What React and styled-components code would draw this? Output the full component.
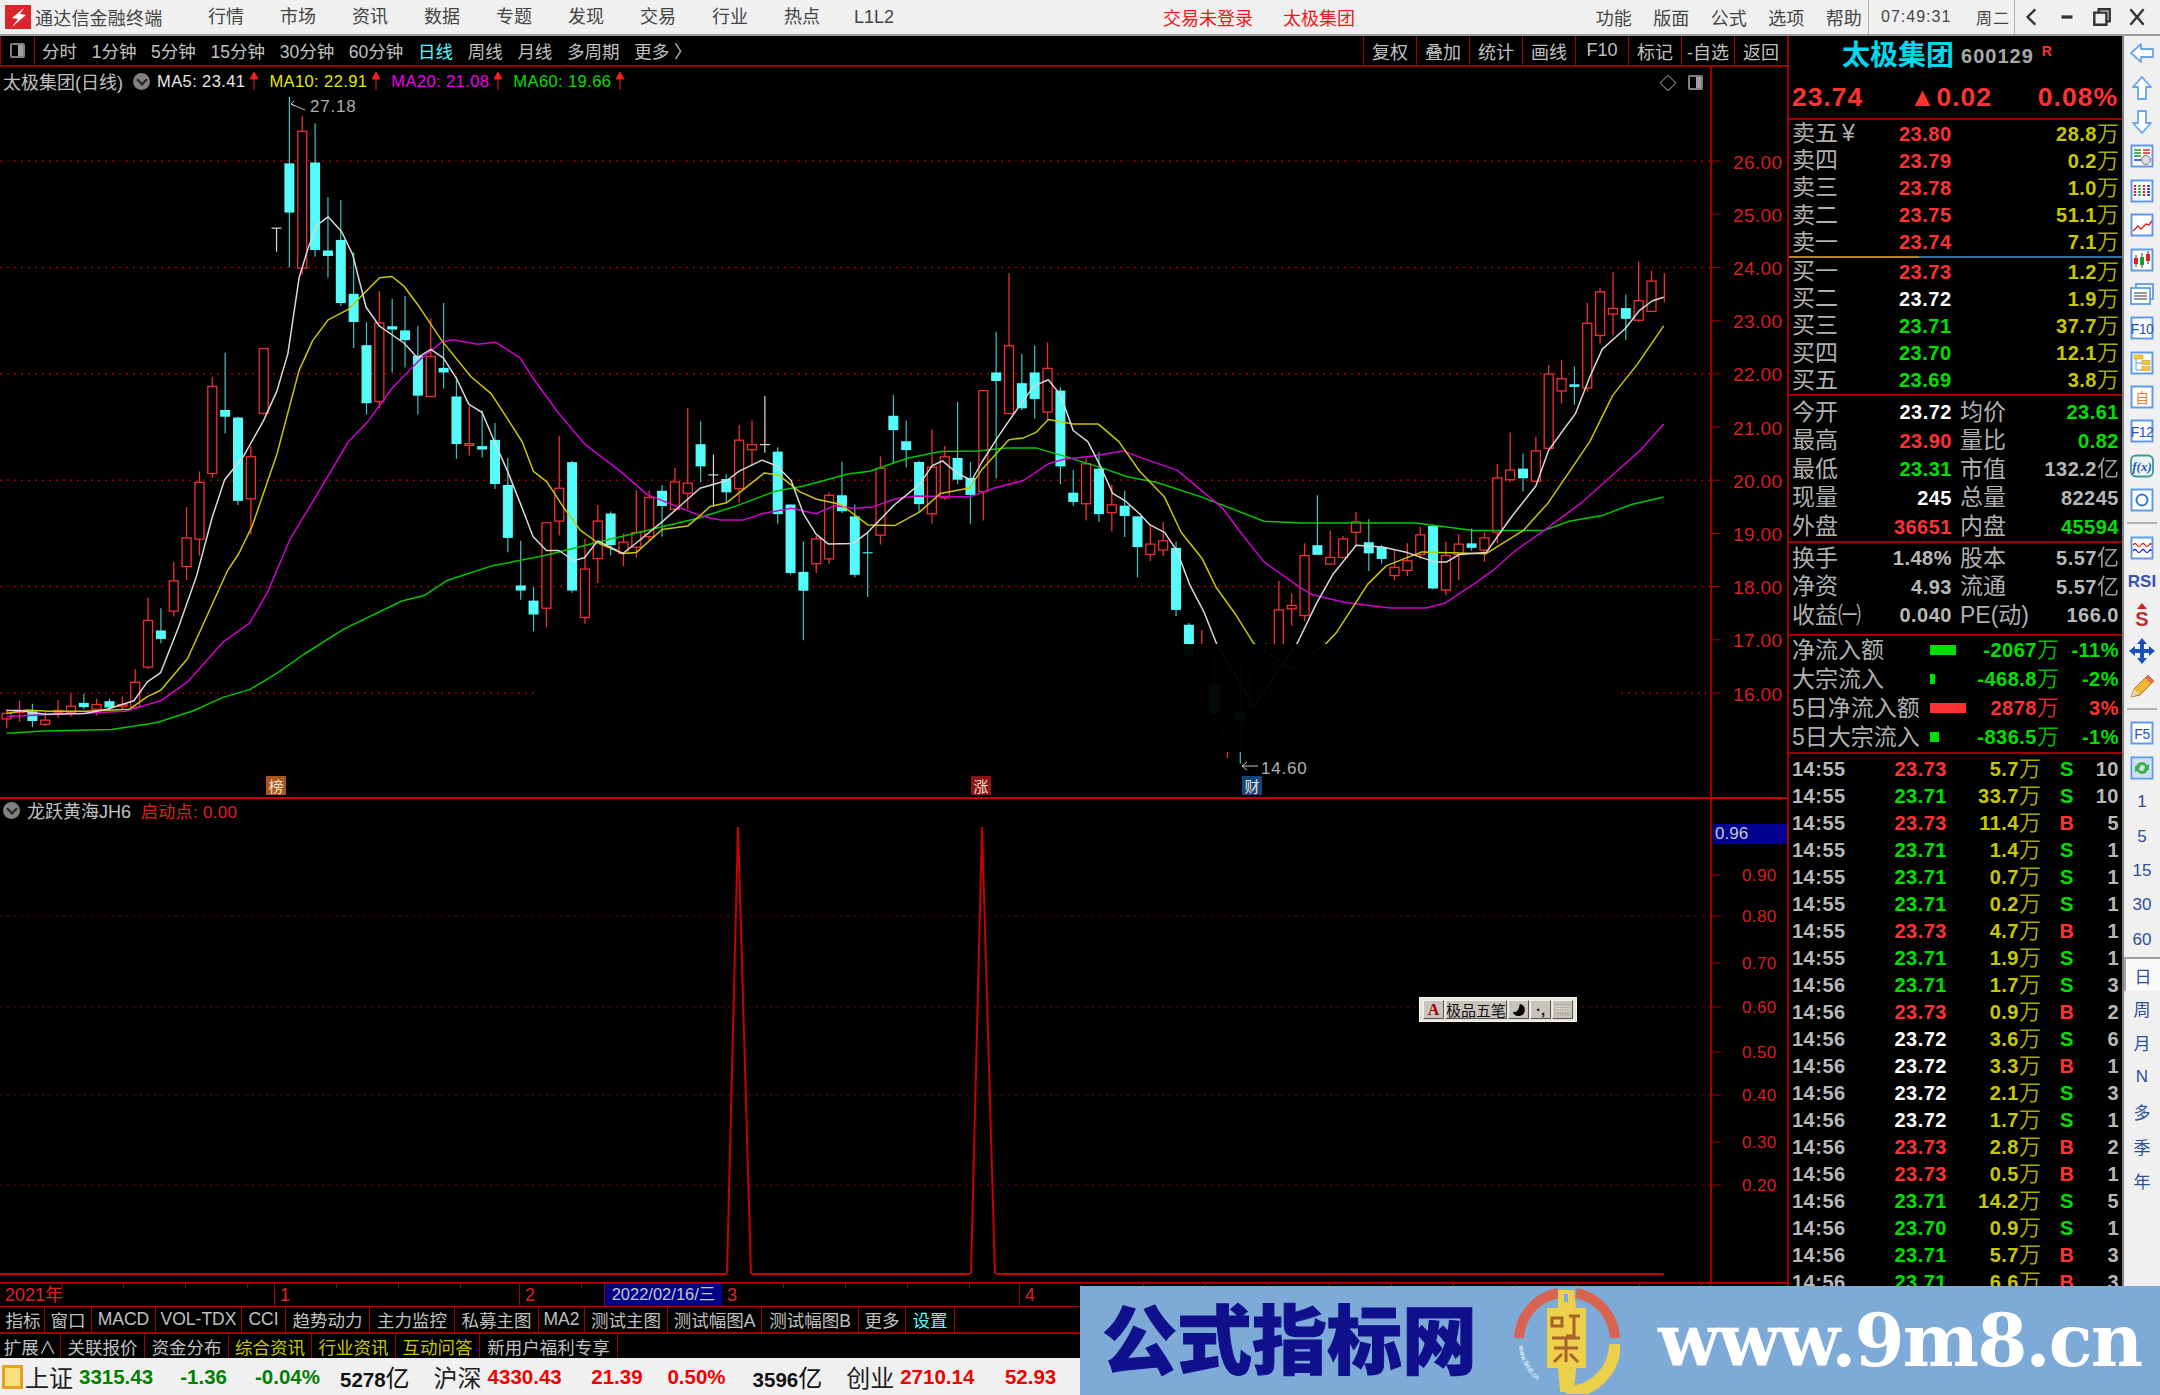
import styled, { createGlobalStyle } from "styled-components";

const FONT = `"Liberation Sans", "Noto Sans CJK SC", sans-serif`;
const RED = "#ff3232";
const GREEN = "#00e000";
const YELLOW = "#c8c800";
const GRAY = "#b8b8b8";
const CYAN = "#54fcfc";
const LINE_RED = "#a00000";

// ---------- Chart data, traced from the picture ----------

const toA = ([x, y]) => [x / 2.24, 80 + y / 2.376];
const toB = ([x, y]) => [650 + x / 2.41, 240 + y / 2.703];
const toC = ([x, y]) => [1150 + x / 2.41, 240 + y / 2.703];
const yA = (y) => 80 + y / 2.376;
const yB = (y) => 240 + y / 2.703;

const candlesA = [
  ["u", 1495, 1505, 1518, 1540], ["u", 1475, 1498, 1503, 1525], ["d", 1482, 1500, 1523, 1538],
  ["u", 1500, 1521, 1531, 1535], ["u", 1473, 1498, 1502, 1515], ["u", 1458, 1488, 1503, 1513],
  ["d", 1458, 1480, 1490, 1495], ["u", 1470, 1484, 1495, 1510], ["d", 1470, 1476, 1491, 1497],
  ["u", 1465, 1484, 1488, 1495], ["u", 1400, 1431, 1490, 1495], ["u", 1230, 1284, 1395, 1400],
  ["d", 1255, 1308, 1328, 1338], ["u", 1145, 1190, 1262, 1275], ["u", 1015, 1088, 1156, 1188],
  ["u", 930, 956, 1091, 1130], ["u", 705, 728, 935, 945], ["d", 648, 784, 800, 840],
  ["d", 800, 802, 1000, 1010], ["u", 870, 895, 995, 1080], ["u", 638, 638, 792, 795],
  ["w", 352, 352, 352, 408], ["d", 40, 198, 315, 445], ["u", 85, 122, 447, 462],
  ["d", 103, 196, 404, 420], ["d", 278, 405, 418, 470], ["d", 285, 380, 530, 537],
  ["d", 410, 508, 575, 637], ["d", 575, 630, 768, 795], ["u", 502, 577, 764, 780],
  ["d", 520, 585, 593, 695], ["d", 513, 595, 618, 683], ["d", 585, 655, 750, 795],
  ["u", 566, 657, 752, 752], ["d", 530, 684, 695, 733], ["d", 705, 752, 865, 900],
  ["u", 775, 864, 868, 892], ["d", 785, 870, 878, 897], ["d", 815, 855, 960, 972],
  ["d", 898, 962, 1088, 1122], ["d", 1095, 1201, 1213, 1235], ["d", 1205, 1237, 1270, 1310],
  ["u", 1052, 1052, 1255, 1300], ["u", 845, 970, 1048, 1082], ["d", 905, 908, 1213, 1218],
  ["u", 1090, 1162, 1277, 1292], ["u", 1010, 1048, 1137, 1195], ["d", 1025, 1030, 1105, 1130],
  ["u", 1078, 1098, 1125, 1155], ["u", 975, 1075, 1110, 1135], ["u", 975, 992, 1085, 1095],
  ["d", 962, 976, 1012, 1085], ["u", 922, 955, 1020, 1025], ["u", 780, 958, 982, 1020],
];

const candlesB = [
  ["d", 490, 552, 612, 655], ["w", 580, 635, 635, 720], ["d", 633, 646, 682, 710],
  ["u", 500, 541, 672, 710], ["u", 488, 553, 567, 610], ["w", 422, 553, 553, 575],
  ["d", 560, 572, 741, 767], ["d", 715, 715, 900, 905], ["d", 815, 897, 948, 1082],
  ["u", 800, 808, 875, 900], ["u", 682, 690, 862, 875], ["d", 600, 690, 733, 738],
  ["d", 715, 747, 905, 912], ["d", 790, 844, 847, 965], ["u", 585, 617, 798, 823],
  ["d", 418, 475, 514, 605], ["d", 488, 544, 568, 615], ["d", 597, 600, 714, 735],
  ["u", 512, 614, 740, 767], ["u", 557, 586, 697, 702], ["d", 438, 589, 648, 660],
  ["d", 600, 643, 689, 767], ["u", 407, 407, 680, 758], ["d", 248, 358, 381, 645],
  ["u", 90, 286, 469, 470], ["d", 308, 387, 455, 460], ["d", 285, 358, 430, 483],
  ["u", 277, 347, 465, 485], ["d", 398, 407, 612, 660], ["d", 622, 683, 708, 718],
  ["u", 590, 605, 713, 758], ["d", 573, 618, 741, 762], ["u", 660, 716, 737, 787],
  ["d", 678, 718, 746, 803], ["d", 747, 747, 830, 912], ["u", 770, 822, 850, 868],
  ["u", 762, 813, 838, 855], ["d", 815, 832, 1000, 1017], ["d", 1035, 1040, 1125, 1215],
  ["u", 1055, 1100, 1230, 1260], ["d", 1100, 1200, 1280, 1300], ["u", 1300, 1320, 1340, 1400],
  ["d", 1150, 1275, 1300, 1415], ["u", 1120, 1150, 1260, 1300], ["u", 1090, 1130, 1250, 1280],
  ["u", 922, 1000, 1200, 1240], ["u", 955, 988, 997, 1042], ["u", 820, 853, 1015, 1030],
  ["d", 690, 825, 851, 851], ["u", 785, 858, 876, 878], ["u", 800, 808, 858, 860],
  ["u", 735, 762, 790, 825], ["d", 755, 817, 847, 895], ["d", 825, 830, 862, 875],
  ["u", 840, 885, 907, 920], ["u", 820, 867, 893, 908], ["u", 775, 797, 850, 862],
  ["d", 770, 773, 942, 945], ["u", 815, 853, 946, 960], ["u", 795, 822, 850, 920],
  ["d", 780, 820, 832, 840], ["u", 790, 805, 838, 870], ["u", 605, 643, 790, 820],
  ["u", 520, 622, 648, 655], ["d", 577, 618, 644, 680], ["u", 532, 570, 652, 655],
  ["u", 338, 362, 563, 565], ["u", 325, 375, 408, 442], ["d", 342, 390, 397, 445],
  ["u", 170, 225, 400, 410], ["u", 130, 140, 258, 280], ["u", 87, 185, 200, 258],
  ["d", 147, 184, 213, 270], ["u", 58, 164, 217, 222], ["u", 82, 111, 193, 195],
  ["u", 90, 111, 111, 168],
];

const candles = [
  ...candlesA.map(([t, ...v]) => [t, ...v.map(yA)]),
  ...candlesB.map(([t, ...v]) => [t, ...v.map(yB)]),
];

const ma5 = [
  ...[[15,1498],[43,1498],[100,1507],[190,1505],[240,1495],[300,1475],[330,1430],[360,1408],[400,1300],[440,1180],[475,1040],[503,950],[545,895],[590,810],[620,740],[645,650],[670,470],[690,400],[710,345],[735,325],[765,360],[790,415],[820,540],[850,585],[905,625],[935,660],[965,640],[993,660],[1023,710],[1050,770],[1080,790],[1106,855],[1137,930],[1167,1010],[1194,1085],[1224,1118],[1252,1118],[1285,1142],[1309,1135],[1339,1095],[1395,1125],[1425,1100],[1483,1050],[1520,1015],[1568,970]].map(toA),
  ...[[185,650],[215,625],[270,595],[305,610],[340,650],[370,740],[400,795],[430,822],[490,820],[525,790],[590,715],[650,660],[680,610],[705,597],[740,630],[775,650],[800,600],[840,530],[880,465],[925,395],[960,378],[990,420],[1020,515],[1055,545],[1085,610],[1115,685],[1145,705],[1180,740],[1205,770],[1240,790],[1270,840],[1300,930],[1335,1005],[1365,1090]].map(toB),
  ...[[250,1260],[355,1090],[400,985],[440,905],[497,825],[560,830],[620,845],[685,870],[715,870],[745,850],[810,845],[870,750],[930,665],[960,570],[995,515],[1025,470],[1060,370],[1090,295],[1145,240],[1180,190],[1210,165],[1238,155]].map(toC),
];

const ma10 = [
  ...[[15,1505],[60,1497],[110,1500],[190,1500],[290,1495],[330,1465],[360,1450],[420,1375],[465,1270],[510,1165],[535,1125],[565,1060],[620,890],[670,690],[700,620],[735,570],[780,545],[850,470],[878,467],[905,490],[940,540],[990,620],[1055,705],[1100,745],[1140,810],[1170,860],[1195,930],[1225,955],[1262,1015],[1300,1070],[1340,1100],[1395,1125],[1425,1123],[1483,1068],[1540,1060],[1568,1035]].map(toA),
  ...[[145,720],[185,710],[275,630],[310,635],[360,680],[400,700],[460,715],[525,770],[590,772],[650,735],[700,685],[770,670],[800,620],[865,540],[900,535],[930,520],[960,485],[1020,497],[1080,497],[1130,545],[1180,625],[1240,695],[1280,790],[1330,860],[1365,940],[1410,1010],[1455,1090]].map(toB),
  ...[[340,1160],[425,1090],[450,1060],[525,930],[570,880],[655,843],[810,848],[900,785],[960,710],[1060,545],[1115,420],[1175,335],[1238,232]].map(toC),
];

const ma20 = [
  ...[[15,1512],[100,1508],[180,1505],[280,1500],[360,1475],[420,1430],[500,1335],[560,1290],[600,1215],[650,1090],[710,985],[780,860],[825,810],[880,730],[940,665],[990,622],[1015,617],[1070,628],[1110,623],[1165,660],[1195,710],[1250,790],[1310,865],[1390,930],[1450,985],[1568,1035]].map(toA),
  ...[[170,757],[225,757],[270,740],[340,725],[400,740],[445,718],[490,725],[535,722],[590,700],[640,692],[770,695],[830,670],[900,650],[960,605],[1000,592],[1060,585],[1140,570],[1200,595],[1270,622],[1380,725],[1430,800],[1480,870],[1568,940]].map(toB),
  ...[[390,958],[470,980],[580,995],[665,995],[710,982],[780,930],[830,890],[880,840],[950,785],[1040,710],[1110,640],[1180,570],[1238,497]].map(toC),
];

const ma60 = [
  ...[[15,1552],[100,1547],[250,1543],[350,1527],[430,1500],[500,1467],[560,1448],[620,1410],[680,1365],[770,1305],[900,1238],[950,1225],[1000,1190],[1100,1155],[1220,1130],[1350,1095],[1568,1040]].map(toA),
  ...[[210,718],[300,680],[370,665],[480,632],[530,625],[620,590],[700,572],[790,570],[860,562],[930,562],[1000,585],[1100,620],[1150,640],[1220,655],[1330,695],[1480,760],[1568,765]].map(toB),
  ...[[640,765],[780,785],[950,785],[1010,760],[1090,745],[1160,715],[1238,695]].map(toC),
];

const asPoints = (pts) => pts.map(([x, y]) => `${x.toFixed(1)},${y.toFixed(1)}`).join(" ");

const priceY = (p) => 161 + (26 - p) * 53.2;
const prices = [26, 25, 24, 23, 22, 21, 20, 19, 18, 17, 16];
const ratioTicks = [
  ["0.90", 875], ["0.80", 916], ["0.70", 963], ["0.60", 1007],
  ["0.50", 1052], ["0.40", 1095], ["0.30", 1142], ["0.20", 1185],
];

// ---------- Panel data ----------

const menuItems = ["行情", "市场", "资讯", "数据", "专题", "发现", "交易", "行业", "热点", "L1L2"];
const sysItems = ["功能", "版面", "公式", "选项", "帮助"];
const periods = ["分时", "1分钟", "5分钟", "15分钟", "30分钟", "60分钟", "日线", "周线", "月线", "多周期", "更多 〉"];
const tools = ["复权", "叠加", "统计", "画线", "F10", "标记", "-自选", "返回"];

const tabsOne = [
  ["指标", 43], ["窗口", 47], ["MACD", 64], ["VOL-TDX", 86], ["CCI", 44], ["趋势动力", 84], ["主力监控", 85],
  ["私募主图", 84], ["MA2", 46], ["测试主图", 83], ["测试幅图A", 94], ["测试幅图B", 97], ["更多", 47], ["设置", 49, CYAN],
];
const tabsTwo = [
  ["扩展∧", 61], ["关联报价", 84], ["资金分布", 84], ["综合资讯", 83, YELLOW], ["行业资讯", 84, YELLOW],
  ["互动问答", 84, YELLOW], ["新用户福利专享", 138],
];

const asks = [
  ["卖五", "23.80", "28.8", RED], ["卖四", "23.79", "0.2", RED], ["卖三", "23.78", "1.0", RED],
  ["卖二", "23.75", "51.1", RED], ["卖一", "23.74", "7.1", RED],
];
const bids = [
  ["买一", "23.73", "1.2", RED], ["买二", "23.72", "1.9", "#fff"], ["买三", "23.71", "37.7", GREEN],
  ["买四", "23.70", "12.1", GREEN], ["买五", "23.69", "3.8", GREEN],
];

const statsOne = [
  ["今开", "23.72", "#fff", "均价", "23.61", GREEN],
  ["最高", "23.90", RED, "量比", "0.82", GREEN],
  ["最低", "23.31", GREEN, "市值", "132.2", GRAY, "亿"],
  ["现量", "245", "#fff", "总量", "82245", GRAY],
  ["外盘", "36651", RED, "内盘", "45594", GREEN],
];
const statsTwo = [
  ["换手", "1.48%", GRAY, "股本", "5.57", GRAY, "亿"],
  ["净资", "4.93", GRAY, "流通", "5.57", GRAY, "亿"],
  ["收益㈠", "0.040", GRAY, "PE(动)", "166.0", GRAY],
];

const flows = [
  ["净流入额", 26, "-2067", "-11%", GREEN],
  ["大宗流入", 5, "-468.8", "-2%", GREEN],
  ["5日净流入额", 36, "2878", "3%", RED],
  ["5日大宗流入", 9, "-836.5", "-1%", GREEN],
];

const ticks = [
  ["14:55", "23.73", RED, "5.7", "S", 10], ["14:55", "23.71", GREEN, "33.7", "S", 10],
  ["14:55", "23.73", RED, "11.4", "B", 5], ["14:55", "23.71", GREEN, "1.4", "S", 1],
  ["14:55", "23.71", GREEN, "0.7", "S", 1], ["14:55", "23.71", GREEN, "0.2", "S", 1],
  ["14:55", "23.73", RED, "4.7", "B", 1], ["14:55", "23.71", GREEN, "1.9", "S", 1],
  ["14:56", "23.71", GREEN, "1.7", "S", 3], ["14:56", "23.73", RED, "0.9", "B", 2],
  ["14:56", "23.72", "#fff", "3.6", "S", 6], ["14:56", "23.72", "#fff", "3.3", "B", 1],
  ["14:56", "23.72", "#fff", "2.1", "S", 3], ["14:56", "23.72", "#fff", "1.7", "S", 1],
  ["14:56", "23.73", RED, "2.8", "B", 2], ["14:56", "23.73", RED, "0.5", "B", 1],
  ["14:56", "23.71", GREEN, "14.2", "S", 5], ["14:56", "23.70", GREEN, "0.9", "S", 1],
  ["14:56", "23.71", GREEN, "5.7", "B", 3], ["14:56", "23.71", GREEN, "6.6", "B", 3],
];

const maLabels = [
  ["MA5: 23.41", "#e8e8e8"], ["MA10: 22.91", "#e8e800"], ["MA20: 21.08", "#f000f0"], ["MA60: 19.66", "#00e000"],
];

const indexItems = [
  { label: "上证", val: "3315.43", chg: "-1.36", chgW: 70, pct: "-0.04%", pctW: 93, amount: "5278", gap: 20, color: "#008000" },
  { label: "沪深", val: "4330.43", chg: "21.39", chgW: 77, pct: "0.50%", pctW: 83, amount: "3596", gap: 27, color: "#f00000" },
  { label: "创业", val: "2710.14", chg: "52.93", chgW: 78, color: "#f00000" },
];

// ---------- Small drawings ----------

const Frame = ({ children }) => (
  <svg width="24" height="24" viewBox="0 0 24 24">
    <rect x="1.5" y="1.5" width="21" height="21" fill="#fff" stroke="#5f9bea" strokeWidth="2" />
    {children}
  </svg>
);

const FrameText = ({ children, color = "#2a4fc0" }) => (
  <text x="12" y="17.5" textAnchor="middle" fontSize="14" letterSpacing="-.5" fontFamily="Liberation Sans, Noto Sans CJK SC" fill={color}>{children}</text>
);

const Arrow = ({ d }) => (
  <svg width="26" height="26" viewBox="0 0 26 26">
    <path d={d} fill="#fff" stroke="#6aa6f0" strokeWidth="1.8" strokeLinejoin="round" />
  </svg>
);

const RailIcons = () => [
  <Arrow key="l" d="M2 13 12 4v5h12v8H12v5z" />,
  <Arrow key="u" d="M13 2 4 12h5v12h8V12h5z" />,
  <Arrow key="d" d="M13 24 4 14h5V2h8v12h5z" />,
  <Frame key="list">
    <path d="M4 6h7M4 9h7M4 12h7" stroke="#1a9a30" strokeWidth="1.6" />
    <path d="M13 6h7M13 9h7" stroke="#e02020" strokeWidth="1.6" />
    <path d="M4 16h7" stroke="#2a4fc0" strokeWidth="1.6" />
    <circle cx="16" cy="16" r="4.5" fill="#ddd" stroke="#777" />
  </Frame>,
  <Frame key="grid">
    <path d="M5 6v12" stroke="#e02020" strokeWidth="2.4" strokeDasharray="2 1" />
    <path d="M9.500 6v12" stroke="#1a9a30" strokeWidth="2.4" strokeDasharray="2 1" />
    <path d="M14 6v12" stroke="#e02020" strokeWidth="2.4" strokeDasharray="2 1" />
    <path d="M18.500 6v12" stroke="#2020e0" strokeWidth="2.4" strokeDasharray="2 1" />
  </Frame>,
  <Frame key="trend"><path d="M3 18 8 13l3 3 5-5 3 1 3-4" fill="none" stroke="#e02020" strokeWidth="1.4" /></Frame>,
  <Frame key="candle">
    <path d="M6 7v12M12 5v15M18 3v13" stroke="#333" />
    <rect x="4" y="10" width="4" height="6" fill="#e02020" />
    <rect x="10" y="9" width="4" height="8" fill="#1a9a30" />
    <rect x="16" y="6" width="4" height="7" fill="#e02020" />
  </Frame>,
  <svg key="win" width="26" height="24" viewBox="0 0 26 24">
    <rect x="7" y="2" width="17" height="15" fill="#fff" stroke="#5f9bea" strokeWidth="1.8" />
    <rect x="2" y="6" width="19" height="16" fill="#fff" stroke="#5f9bea" strokeWidth="1.8" />
    <path d="M5 11h13M5 14h13M5 17h13" stroke="#777" strokeWidth="1.5" />
  </svg>,
  <Frame key="f10"><FrameText>F10</FrameText></Frame>,
  <Frame key="tree">
    <path d="M6 8v11h6M6 12h6" fill="none" stroke="#5f9bea" />
    <rect x="4" y="4" width="9" height="4" fill="#f5c842" stroke="#c89a20" strokeWidth=".6" />
    <rect x="12" y="9.500" width="8" height="4" fill="#f5c842" stroke="#c89a20" strokeWidth=".6" />
    <rect x="12" y="15.500" width="8" height="4" fill="#f5c842" stroke="#c89a20" strokeWidth=".6" />
  </Frame>,
  <Frame key="zi"><FrameText color="#ff7a30">自</FrameText></Frame>,
  <Frame key="f12"><FrameText>F12</FrameText></Frame>,
  <svg key="fx" width="26" height="24" viewBox="0 0 26 24">
    <rect x="2" y="1.500" width="22" height="21" rx="5" fill="#eaf6f4" stroke="#3a9a94" strokeWidth="1.8" />
    <text x="13" y="17" textAnchor="middle" fontSize="13" fontStyle="italic" fontWeight="700" fontFamily="Liberation Serif" fill="#2a4fc0">f(x)</text>
  </svg>,
  <Frame key="circle"><circle cx="12" cy="12" r="5.500" fill="none" stroke="#2a7fd0" strokeWidth="2" /></Frame>,
  null,
  <Frame key="wave">
    <path d="M3 9q2-3 4 0t4 0 4 0 4 0 2 0" fill="none" stroke="#e02020" strokeWidth="1.3" />
    <path d="M3 15q2-3 4 0t4 0 4 0 4 0 2 0" fill="none" stroke="#2020e0" strokeWidth="1.3" />
  </Frame>,
  <RsiMark key="rsi">RSI</RsiMark>,
  <svg key="s" width="26" height="32" viewBox="0 0 26 32">
    <path d="M13 2 8 8h10z" fill="#d02020" />
    <text x="13" y="25" textAnchor="middle" fontSize="20" fontWeight="700" fontFamily="Liberation Sans" fill="#c02828" stroke="#999" strokeWidth=".4">S</text>
  </svg>,
  <svg key="move" width="28" height="28" viewBox="0 0 28 28">
    <path d="M14 1l5 6h-3v5h5V9l6 5-6 5v-3h-5v5h3l-5 6-5-6h3v-5H7v3l-6-5 6-5v3h5V7H9z" fill="#1a4fc0" />
  </svg>,
  <svg key="pen" width="28" height="28" viewBox="0 0 28 28">
    <path d="M3 25 6 17 20 3l6 6-14 14z" fill="#f2b632" stroke="#a87a20" />
    <path d="M20 3l6 6-3 3-6-6z" fill="#e86a5a" />
    <path d="M3 25l3-8 5 5z" fill="#e8d8b8" />
  </svg>,
  null,
  <Frame key="f5"><FrameText>F5</FrameText></Frame>,
  <Frame key="refresh">
    <rect x="3" y="3" width="18" height="18" fill="#d0e0f0" />
    <path d="M6 11a6 6 0 0 1 11-2l2-1v6h-6l2-2a3 3 0 0 0-6 0zM18 13a6 6 0 0 1-11 2l-2 1v-6h6l-2 2a3 3 0 0 0 6 0z" fill="#3ab04a" />
  </Frame>,
];

const railLabels = ["1", "5", "15", "30", "60", "日", "周", "月", "N", "多", "季", "年"];

// Petit logo du bandeau, dessiné à la main
const BannerLogo = () => (
  <svg width="106" height="106" viewBox="0 0 106 106">
    <defs>
      <path id="rimText" d="M5 58A48 48 0 0 0 45 102" />
    </defs>
    <path d="M5 50A48 48 0 0 1 44 5M62 5A48 48 0 0 1 101 50" fill="none" stroke="#d9634f" strokeWidth="10" />
    <path d="M101 56A48 48 0 0 1 52 104" fill="none" stroke="#eccf4a" strokeWidth="12" />
    <text fontSize="7" fontFamily="Liberation Sans" fill="#fff">
      <textPath href="#rimText">www.9m8.cn</textPath>
    </text>
    <path d="M44 2h16l2 18h10v60H62l-2 24H46l-2-24H33V20h11zM50 6v8h4V6z" fill="#eccf4a" fillRule="evenodd" />
    <path d="M38 30h10v8H38zM55 28h11M60 28v20h-8M38 50h28M40 60h24M52 50v24M40 74l8-8M64 74l-8-8" fill="none" stroke="#a8622a" strokeWidth="3" />
  </svg>
);

// ---------- Component ----------

export default function App() {
  return (
    <Page>
      <GlobalStyle />

      <TopBar>
        <AppLogo viewBox="0 0 26 24">
          <rect width="26" height="24" fill="#d8262c" />
          <path d="M19 3 7 13l6 1-6 8 14-12-6-1z" fill="#fff" />
        </AppLogo>
        <AppName>通达信金融终端</AppName>
        <MenuList>
          {menuItems.map((m) => <MenuItem key={m}>{m}</MenuItem>)}
        </MenuList>
        <AlertText>
          <span>交易未登录</span>
          <span>太极集团</span>
        </AlertText>
        <SysMenu>
          {sysItems.map((m) => <SysItem key={m}>{m}</SysItem>)}
        </SysMenu>
        <Clock>
          <span>07:49:31</span>
          <span>周二</span>
        </Clock>
        <WinButtons>
          <WinGlyph viewBox="0 0 20 20"><path d="M13 3 6 10l7 7" /></WinGlyph>
          <WinGlyph viewBox="0 0 20 20"><path d="M5 10h10" strokeWidth="3" /></WinGlyph>
          <WinGlyph viewBox="0 0 20 20"><path d="M7 6V3h10v11h-3M3 6h11v11H3z" /></WinGlyph>
          <WinGlyph viewBox="0 0 20 20"><path d="m4 3 12 14M16 3 4 17" /></WinGlyph>
        </WinButtons>
      </TopBar>

      <Body>
        <MainColumn>
          <Toolbar>
            <PanelToggle><ToggleBox /></PanelToggle>
            <PeriodList>
              {periods.map((p) => <Period key={p} $active={p === "日线"}>{p}</Period>)}
            </PeriodList>
            <ToolList>
              {tools.map((t) => <Tool key={t}>{t}</Tool>)}
            </ToolList>
          </Toolbar>

          <PricePane>
            <PaneHeader $top={3}>
              <PaneName>太极集团(日线)</PaneName>
              <RoundMark />
              {maLabels.map(([text, color]) => (
                <MaLabel key={text} $color={color}>
                  {text}
                  <UpMark viewBox="0 0 8 18"><path d="M4 18V5M4 0 0 7h8z" /></UpMark>
                </MaLabel>
              ))}
            </PaneHeader>
            <CornerMarks>
              <Diamond />
              <ToggleBox />
            </CornerMarks>
            <ChartSvg width="1787" height="730" viewBox="0 67 1787 730">
              {[26, 24, 22, 20, 18].map((p) => (
                <GridLine key={p} x1="0" x2="1711" y1={priceY(p)} y2={priceY(p)} />
              ))}
              <GridLine x1="0" x2="535" y1={priceY(16)} y2={priceY(16)} />
              <GridLine x1="1621" x2="1711" y1={priceY(16)} y2={priceY(16)} />

              {candles.map(([type, hi, top, bot, lo], i) => {
                const x = 6.7 + i * 12.85;
                if (type === "w") {
                  return (
                    <g key={i} stroke="#d8d8d8" strokeWidth="1.2">
                      <line x1={x} x2={x} y1={hi} y2={lo} />
                      <line x1={x - 5} x2={x + 5} y1={top} y2={top} />
                    </g>
                  );
                }
                if (type === "d") {
                  return (
                    <g key={i}>
                      <line x1={x} x2={x} y1={hi} y2={lo} stroke="#3cc4c4" strokeWidth="1.2" />
                      <rect x={x - 5} y={top} width="10" height={bot - top} fill={CYAN} />
                    </g>
                  );
                }
                return (
                  <g key={i} stroke="#f03030" strokeWidth="1.3">
                    <line x1={x} x2={x} y1={hi} y2={top} />
                    <line x1={x} x2={x} y1={bot} y2={lo} />
                    <rect x={x - 4.500} y={top} width="9" height={bot - top} fill="#000" />
                  </g>
                );
              })}

              <MaLine points={asPoints(ma60)} stroke="#00c800" />
              <MaLine points={asPoints(ma20)} stroke="#d000d0" />
              <MaLine points={asPoints(ma10)} stroke="#c8c800" />
              <MaLine points={asPoints(ma5)} stroke="#d8d8d8" />

              {/* zone masquée dans le creux du graphique */}
              <rect x="1170" y="644" width="170" height="108" fill="#000" opacity=".96" />

              <g stroke="#c0c0c0" fill="none" strokeWidth="1">
                <path d="M305 110 291 104l3-3M291 104l4 2" />
                <path d="M1258 766h-16m5-4-5 4 5 4" />
              </g>
              <ChartNote x="310" y="112">27.18</ChartNote>
              <ChartNote x="1261" y="774">14.60</ChartNote>

              <line x1="1711" x2="1711" y1="67" y2="797" stroke={LINE_RED} strokeWidth="2" />
              {prices.map((p) => (
                <g key={p}>
                  <line x1="1711" x2="1721" y1={priceY(p)} y2={priceY(p)} stroke={LINE_RED} />
                  <AxisLabel x="1733" y={priceY(p) + 7.5}>{p.toFixed(2)}</AxisLabel>
                </g>
              ))}
            </ChartSvg>
            <EventMark $left={266} $bg="#a8581a">榜</EventMark>
            <EventMark $left={971} $bg="#8c1414">涨</EventMark>
            <EventMark $left={1242} $bg="#14467c">财</EventMark>
          </PricePane>

          <SignalPane>
            <PaneHeader $top={0}>
              <RoundMark />
              <PaneName>龙跃黄海JH6</PaneName>
              <SignalValue>启动点: 0.00</SignalValue>
            </PaneHeader>
            <ValueTag>0.96</ValueTag>
            <ChartSvg width="1787" height="483" viewBox="0 799 1787 483">
              {[916, 1007, 1095, 1185].map((y) => <GridLine key={y} $dim x1="0" x2="1711" y1={y} y2={y} />)}
              <polyline points="0,1274 726,1274" fill="none" stroke="#c80000" strokeWidth="2" />
              <polyline points="752,1274 970,1274" fill="none" stroke="#c80000" strokeWidth="2" />
              <polyline points="996,1274 1664,1274" fill="none" stroke="#c80000" strokeWidth="2" />
              <polyline points="727,1274 738,827 751,1274" fill="none" stroke="#c80000" strokeWidth="2" />
              <polyline points="971,1274 982,827 995,1274" fill="none" stroke="#c80000" strokeWidth="2" />
              <line x1="1711" x2="1711" y1="799" y2="1282" stroke={LINE_RED} strokeWidth="2" />
              {ratioTicks.map(([label, y]) => (
                <g key={label}>
                  <line x1="1711" x2="1721" y1={y} y2={y} stroke={LINE_RED} />
                  <AxisLabel x="1742" y={y + 6} $small>{label}</AxisLabel>
                </g>
              ))}
            </ChartSvg>
            <ImeBar>
              <ImeKey><ImeLetter>A</ImeLetter></ImeKey>
              <ImeKey $wide>极品五笔</ImeKey>
              <ImeKey>
                <svg width="14" height="14" viewBox="0 0 16 16"><path d="M9 1a7 7 0 1 1-8 9q6 2 8-9z" /></svg>
              </ImeKey>
              <ImeKey $bold>·,</ImeKey>
              <ImeKey>
                <svg width="15" height="13" viewBox="0 0 18 14">
                  <rect width="18" height="14" fill="#b8b4ac" />
                  <path d="M1 3h16M1 6h16M1 9h16" stroke="#fff" strokeDasharray="2 1" />
                </svg>
              </ImeKey>
            </ImeBar>
          </SignalPane>

          <DateAxis>
            <DateCell $w={275}>2021年</DateCell>
            <DateCell $w={245}>1</DateCell>
            <DateCell $w={85}>2</DateCell>
            <DateBox>2022/02/16/三</DateBox>
            <DateCell $w={298}>3</DateCell>
            <DateCell $w={691}>4</DateCell>
          </DateAxis>

          <TabRow $pad={2}>
            {tabsOne.map(([label, w, color]) => <Tab key={label} $w={w} $color={color}>{label}</Tab>)}
          </TabRow>
          <TabRow>
            {tabsTwo.map(([label, w, color]) => <Tab key={label} $w={w} $color={color}>{label}</Tab>)}
          </TabRow>
        </MainColumn>

        <QuotePanel>
          <TitleRow>
            <StockName>太极集团</StockName>
            <StockCode>600129</StockCode>
            <Rights>R</Rights>
          </TitleRow>
          <LastRow>
            <span>23.74</span>
            <span>▲0.02</span>
            <span>0.08%</span>
          </LastRow>
          <OrderBlock>
            {asks.map(([label, price, qty, color], i) => (
              <OrderRow key={label}>
                <Label>{label}{i === 0 && <Yen>¥</Yen>}</Label>
                <Num $color={color}>{price}</Num>
                <Amount $color={YELLOW}><Num $color={YELLOW}>{qty}</Num><Unit>万</Unit></Amount>
              </OrderRow>
            ))}
          </OrderBlock>
          <SpreadLine />
          <OrderBlock $divider>
            {bids.map(([label, price, qty, color]) => (
              <OrderRow key={label}>
                <Label>{label}</Label>
                <Num $color={color}>{price}</Num>
                <Amount $color={YELLOW}><Num $color={YELLOW}>{qty}</Num><Unit>万</Unit></Amount>
              </OrderRow>
            ))}
          </OrderBlock>
          <StatBlock $lead={2}>
            {statsOne.map(([a, av, ac, b, bv, bc, unit]) => (
              <StatRow key={a}>
                <Label>{a}</Label>
                <Num $color={ac} $right>{av}</Num>
                <Label>{b}</Label>
                <Amount $color={bc}><Num $color={bc}>{bv}</Num>{unit && <Unit>{unit}</Unit>}</Amount>
              </StatRow>
            ))}
          </StatBlock>
          <StatBlock $lead={1} $tail={4}>
            {statsTwo.map(([a, av, ac, b, bv, bc, unit]) => (
              <StatRow key={a}>
                <Label>{a}</Label>
                <Num $color={ac} $right>{av}</Num>
                <Label>{b}</Label>
                <Amount $color={bc}><Num $color={bc}>{bv}</Num>{unit && <Unit>{unit}</Unit>}</Amount>
              </StatRow>
            ))}
          </StatBlock>
          <StatBlock>
            {flows.map(([label, bar, value, pct, color]) => (
              <FlowRow key={label}>
                <Label>{label}</Label>
                <FlowBar style={{ width: bar }} $color={color} />
                <Amount $color={color}><Num $color={color}>{value}</Num><Unit>万</Unit></Amount>
                <Num $color={color} $right>{pct}</Num>
              </FlowRow>
            ))}
          </StatBlock>
          <TickList>
            {ticks.map(([time, price, color, qty, side, count], i) => (
              <TickRow key={i}>
                <Num $color={GRAY}>{time}</Num>
                <Num $color={color} $right>{price}</Num>
                <Amount $color={YELLOW}><Num $color={YELLOW}>{qty}</Num><Unit>万</Unit></Amount>
                <Num $color={side === "S" ? GREEN : RED} $center>{side}</Num>
                <Num $color={GRAY} $right>{count}</Num>
              </TickRow>
            ))}
          </TickList>
        </QuotePanel>

        <IconRail>
          {RailIcons().map((icon, i) => (icon ? <RailSlot key={i}>{icon}</RailSlot> : <RailRule key={i} />))}
          {railLabels.map((l) => <RailText key={l} $active={l === "日"}>{l}</RailText>)}
        </IconRail>
      </Body>

      <StatusBar>
        <StatusIcon />
        {indexItems.map((it) => (
          <IndexGroup key={it.label}>
            <IndexName>{it.label}</IndexName>
            <IndexNum $color={it.color} $w={78}>{it.val}</IndexNum>
            <IndexNum $color={it.color} $w={it.chgW} $end>{it.chg}</IndexNum>
            {it.pct && <IndexNum $color={it.color} $w={it.pctW} $end>{it.pct}</IndexNum>}
            {it.amount && <IndexAmount $gap={it.gap}>{it.amount}<IndexUnit>亿</IndexUnit></IndexAmount>}
          </IndexGroup>
        ))}
      </StatusBar>

      <Banner>
        <BannerTitle>公式指标网</BannerTitle>
        <BannerLogo />
        <BannerUrl>www.9m8.cn</BannerUrl>
      </Banner>
    </Page>
  );
}

// ---------- Styles ----------

const GlobalStyle = createGlobalStyle`
  html, body {
    margin: 0;
    padding: 0;
    background: #000;
  }
`;

const Page = styled.div`
  position: relative;
  width: 2160px;
  height: 1395px;
  overflow: hidden;
  display: flex;
  flex-direction: column;
  background: #000;
  font-family: ${FONT};
`;

// Barre de titre
const TopBar = styled.header`
  flex: 0 0 36px;
  box-sizing: border-box;
  display: flex;
  align-items: center;
  padding-left: 5px;
  background: #f0f0f0;
  border-bottom: 2px solid #9a9a9a;
  color: #444;
  font-size: 18px;
`;

const AppLogo = styled.svg`
  width: 26px;
  height: 24px;
`;

const AppName = styled.div`
  width: 144px;
  margin-left: 4px;
  font-size: 18px;
  letter-spacing: .2px;
  white-space: nowrap;
`;

const MenuList = styled.nav`
  display: flex;
  margin-left: 11px;
`;

const MenuItem = styled.div`
  width: 72px;
  line-height: 26px;
  text-align: center;
`;

const AlertText = styled.div`
  display: flex;
  gap: 30px;
  margin-left: 253px;
  color: #f01818;
`;

const SysMenu = styled.div`
  display: flex;
  margin-left: 0;
  position: absolute;
  left: 1585px;
`;

const SysItem = styled.div`
  width: 57.500px;
  text-align: center;
`;

const Clock = styled.div`
  position: absolute;
  left: 1868px;
  width: 147px;
  height: 34px;
  top: 0;
  box-sizing: border-box;
  padding: 0 4px 0 12px;
  display: flex;
  align-items: center;
  justify-content: space-between;
  border-left: 1px solid #b0b0b0;
  border-right: 1px solid #b0b0b0;
  font-size: 16px;
  letter-spacing: 1px;
`;

const WinButtons = styled.div`
  position: absolute;
  left: 2021px;
  display: flex;
  gap: 13px;
`;

const WinGlyph = styled.svg`
  width: 22px;
  height: 22px;
  fill: none;
  stroke: #333;
  stroke-width: 2.2;
`;

const Body = styled.div`
  flex: 1;
  min-height: 0;
  display: flex;
`;

const MainColumn = styled.main`
  flex: 0 0 1787px;
  display: flex;
  flex-direction: column;
`;

// Barre d'outils au-dessus du graphique
const Toolbar = styled.div`
  flex: 0 0 31px;
  box-sizing: border-box;
  display: flex;
  align-items: center;
  border-bottom: 2px solid ${LINE_RED};
  border-left: 1px solid ${LINE_RED};
  color: #c0c0c0;
  font-size: 18px;
`;

const PanelToggle = styled.div`
  flex: 0 0 34px;
  height: 100%;
  display: flex;
  align-items: center;
  justify-content: center;
  border-right: 1px solid ${LINE_RED};
  box-sizing: border-box;
`;

const ToggleBox = styled.span`
  display: block;
  width: 15px;
  height: 15px;
  box-sizing: border-box;
  border: 2px solid #808080;
  border-radius: 2px;
  background: linear-gradient(90deg, transparent 55%, #a0a0a0 55%);
`;

const PeriodList = styled.div`
  display: flex;
  gap: 14.700px;
  padding-left: 7px;
  font-size: 17.500px;
`;

const Period = styled.span`
  color: ${(p) => (p.$active ? CYAN : "#c0c0c0")};
  white-space: nowrap;
`;

const ToolList = styled.div`
  margin-left: auto;
  height: 100%;
  display: flex;
`;

const Tool = styled.div`
  width: 53px;
  box-sizing: border-box;
  display: flex;
  align-items: center;
  justify-content: center;
  border-left: 1px solid ${LINE_RED};
`;

// Panneau des cours
const PricePane = styled.section`
  position: relative;
  flex: 0 0 732px;
  box-sizing: border-box;
  border-bottom: 2px solid #c80000;
`;

const ChartSvg = styled.svg`
  display: block;
`;

const PaneHeader = styled.div`
  position: absolute;
  left: 3px;
  top: ${(p) => p.$top}px;
  display: flex;
  align-items: center;
  height: 22px;
  gap: 6px;
  color: #c0c0c0;
  font-size: 18px;
  white-space: nowrap;
`;

const PaneName = styled.span`
  margin-right: 4px;
`;

const RoundMark = styled.span`
  display: block;
  width: 17px;
  height: 17px;
  border-radius: 50%;
  background: #808080;
  margin-right: 1px;

  &::after {
    content: "";
    display: block;
    width: 6px;
    height: 6px;
    margin: 3px auto 0;
    border-right: 2px solid #222;
    border-bottom: 2px solid #222;
    transform: rotate(45deg);
  }
`;

const MaLabel = styled.span`
  display: inline-flex;
  align-items: center;
  gap: 5px;
  margin-right: 5px;
  color: ${(p) => p.$color};
  font-size: 16.500px;
  letter-spacing: .4px;
`;

const UpMark = styled.svg`
  width: 8px;
  height: 18px;
  fill: #f02020;
  stroke: #f02020;
`;

const CornerMarks = styled.div`
  position: absolute;
  left: 1662px;
  top: 8px;
  display: flex;
  align-items: center;
  gap: 14px;
`;

const Diamond = styled.span`
  display: block;
  width: 10px;
  height: 10px;
  border: 1px solid #808080;
  transform: rotate(45deg);
`;

const GridLine = styled.line`
  stroke: ${(p) => (p.$dim ? "#800000" : "#a00000")};
  stroke-width: ${(p) => (p.$dim ? 1 : 1.500)};
  stroke-dasharray: 2 5;
`;

const MaLine = styled.polyline`
  fill: none;
  stroke-width: 1.500;
  stroke-linejoin: round;
`;

const ChartNote = styled.text`
  fill: #b0b0b0;
  font-family: ${FONT};
  font-size: 17px;
  letter-spacing: .8px;
`;

const AxisLabel = styled.text`
  fill: #d81e1e;
  font-family: ${FONT};
  font-size: ${(p) => (p.$small ? "17px" : "19px")};
  letter-spacing: .4px;
`;

const EventMark = styled.span`
  position: absolute;
  left: ${(p) => p.$left}px;
  top: 709px;
  width: 20px;
  height: 19px;
  display: flex;
  align-items: center;
  justify-content: center;
  background: ${(p) => p.$bg};
  color: #f0e0d0;
  font-size: 15px;
`;

// Panneau de l'indicateur
const SignalPane = styled.section`
  position: relative;
  flex: 0 0 483px;
`;

const SignalValue = styled.span`
  color: #e02020;
  font-size: 17px;
  letter-spacing: .3px;
`;

const ValueTag = styled.div`
  position: absolute;
  left: 1713px;
  top: 25px;
  width: 74px;
  height: 20px;
  padding-left: 2px;
  box-sizing: border-box;
  background: #000090;
  color: #c8c8c8;
  font-size: 17px;
  line-height: 20px;
`;

const ImeBar = styled.div`
  position: absolute;
  left: 1419px;
  top: 198px;
  width: 158px;
  height: 25px;
  box-sizing: border-box;
  padding: 2px 3px;
  display: flex;
  gap: 1px;
  background: #e8e4d8;
  border: 1px solid #f8f8f0;
`;

const ImeKey = styled.div`
  flex: ${(p) => (p.$wide ? "1" : "0 0 19px")};
  display: flex;
  align-items: center;
  justify-content: center;
  background: #c8c4bc;
  border-right: 1px solid #555;
  border-bottom: 1px solid #555;
  border-top: 1px solid #f0f0f0;
  border-left: 1px solid #f0f0f0;
  color: #111;
  font-size: 15px;
  font-weight: ${(p) => (p.$bold ? 700 : 400)};
  white-space: nowrap;
`;

const ImeLetter = styled.span`
  color: #a00000;
  font-family: "Liberation Serif", serif;
  font-size: 16px;
  font-weight: 700;
`;

const DateAxis = styled.div`
  flex: 0 0 24px;
  box-sizing: border-box;
  display: flex;
  border-bottom: 1px solid ${LINE_RED};
  border-top: 2px solid ${LINE_RED};
  color: #e02020;
  font-size: 18px;
`;

const DateCell = styled.div`
  flex: 0 0 ${(p) => p.$w}px;
  box-sizing: border-box;
  padding-left: 5px;
  line-height: 22px;
  border-right: 1px solid ${LINE_RED};
  height: 100%;
  white-space: nowrap;
  background: repeating-linear-gradient(90deg, transparent 0 61px, ${LINE_RED} 61px 62px) 0 0 / 100% 4px no-repeat;
`;

const DateBox = styled.div`
  flex: 0 0 117px;
  background: #000088;
  color: #c8c8c8;
  line-height: 21px;
  font-size: 16.500px;
  text-align: center;
  white-space: nowrap;
`;

const TabRow = styled.div`
  flex: 0 0 26px;
  box-sizing: border-box;
  display: flex;
  padding-left: ${(p) => p.$pad || 0}px;
  border-bottom: 2px solid ${LINE_RED};
`;

const Tab = styled.div`
  flex: 0 0 ${(p) => p.$w}px;
  box-sizing: border-box;
  display: flex;
  align-items: center;
  justify-content: center;
  border-right: 1px solid ${LINE_RED};
  color: ${(p) => p.$color || "#c0c0c0"};
  font-size: 17.500px;
  white-space: nowrap;
  overflow: hidden;
`;

// Panneau de cotation à droite
const QuotePanel = styled.aside`
  flex: 0 0 335px;
  box-sizing: border-box;
  overflow: hidden;
  border-left: 2px solid ${LINE_RED};
  display: flex;
  flex-direction: column;
`;

const TitleRow = styled.div`
  flex: 0 0 38px;
  display: flex;
  align-items: center;
  padding-left: 53px;
  padding-top: 2px;
  box-sizing: border-box;
`;

const StockName = styled.div`
  color: #00d8f0;
  font-size: 28px;
  font-weight: 700;
  line-height: 1;
  white-space: nowrap;
`;

const StockCode = styled.div`
  margin-left: 7px;
  color: #a8a8a8;
  font-size: 20px;
  font-weight: 700;
  letter-spacing: 1px;
`;

const Rights = styled.div`
  align-self: flex-start;
  margin: 5px 0 0 8px;
  color: ${RED};
  font-size: 14px;
  font-weight: 700;
`;

const LastRow = styled.div`
  flex: 0 0 46px;
  box-sizing: border-box;
  display: flex;
  align-items: center;
  justify-content: space-between;
  padding: 2px 4px 0 3px;
  border-bottom: 2px solid ${LINE_RED};
  color: ${RED};
  font-size: 26.500px;
  font-weight: 700;
  letter-spacing: 1px;
`;

const OrderBlock = styled.div`
  flex: 0 0 auto;
  border-bottom: ${(p) => (p.$divider ? `2px solid ${LINE_RED}` : "none")};
`;

const OrderRow = styled.div`
  height: 27.200px;
  display: grid;
  grid-template-columns: 107px 60px 1fr;
  align-items: center;
  padding: 0 3px;
`;

const SpreadLine = styled.div`
  flex: 0 0 2px;
  background: linear-gradient(90deg, #b08030 0 130px, #3070a0 130px);
`;

const Label = styled.span`
  color: #b0b0b0;
  font-size: 23px;
  line-height: 1;
  white-space: nowrap;
`;

const Yen = styled.span`
  margin-left: 4px;
  font-size: 23px;
`;

const Num = styled.span`
  color: ${(p) => p.$color};
  font-size: 20px;
  font-weight: 700;
  letter-spacing: .5px;
  line-height: 1;
  text-align: ${(p) => (p.$right ? "right" : p.$center ? "center" : "left")};
  white-space: nowrap;
`;

const Amount = styled.span`
  display: flex;
  align-items: center;
  justify-content: flex-end;
  color: ${(p) => p.$color};
  white-space: nowrap;
`;

const Unit = styled.span`
  font-size: 22px;
  line-height: 1;
  filter: brightness(.85);
`;

const StatBlock = styled.div`
  flex: 0 0 auto;
  padding-top: ${(p) => p.$lead || 0}px;
  padding-bottom: ${(p) => p.$tail || 0}px;
  border-bottom: 2px solid ${LINE_RED};
`;

const StatRow = styled.div`
  height: 28.600px;
  display: grid;
  grid-template-columns: 100px 60px 8px 47px 1fr;
  align-items: center;
  padding: 0 3px;

  & > :nth-child(3) {
    grid-column: 4;
  }
`;

const FlowRow = styled.div`
  height: 29px;
  display: grid;
  grid-template-columns: 138px 30px 99px 1fr;
  align-items: center;
  padding: 0 3px;
`;

const FlowBar = styled.span`
  display: block;
  height: 10px;
  background: ${(p) => p.$color};
`;

const TickList = styled.div`
  flex: 1;
  padding-top: 2px;
`;

const TickRow = styled.div`
  height: 27px;
  display: grid;
  grid-template-columns: 52px 103px 94px 52px 1fr;
  align-items: center;
  padding: 0 3px;
`;

// Colonne d'icônes à droite
const IconRail = styled.aside`
  flex: 0 0 38px;
  box-sizing: border-box;
  display: flex;
  flex-direction: column;
  background: #f0f0f0;
  border-left: 2px solid #808080;
`;

const RailSlot = styled.div`
  flex: 0 0 34.400px;
  display: flex;
  align-items: center;
  justify-content: center;
`;

const RailRule = styled.div`
  flex: 0 0 8.400px;
  box-sizing: border-box;
  border-top: 2px solid #b0b0b0;
  margin: 5px 3px 0;
`;

const RailText = styled.div`
  flex: 0 0 34.400px;
  box-sizing: border-box;
  display: flex;
  align-items: center;
  justify-content: center;
  color: #2a4f9c;
  font-size: 17px;
  background: ${(p) => (p.$active ? "#fafafa" : "transparent")};
  border-top: ${(p) => (p.$active ? "2px solid #a0a0a0" : "none")};
  border-left: ${(p) => (p.$active ? "2px solid #a0a0a0" : "none")};
`;

const RsiMark = styled.span`
  color: #3a52b0;
  font-size: 17px;
  font-weight: 700;
`;

// Barre d'état du bas
const StatusBar = styled.footer`
  flex: 0 0 37px;
  display: flex;
  align-items: center;
  padding-left: 2px;
  background: #f0f0f0;
`;

const StatusIcon = styled.span`
  flex: 0 0 21px;
  height: 24px;
  margin-right: 2px;
  box-sizing: border-box;
  border: 3px solid #e8a020;
  background: #fbe080;
`;

const IndexGroup = styled.div`
  display: flex;
  align-items: center;
  margin-right: 24px;
`;

const IndexName = styled.span`
  width: 54px;
  color: #222;
  font-size: 24px;
`;

const IndexNum = styled.span`
  width: ${(p) => p.$w}px;
  color: ${(p) => p.$color};
  font-size: 20.500px;
  font-weight: 700;
  text-align: ${(p) => (p.$end ? "right" : "left")};
  white-space: nowrap;
`;

const IndexAmount = styled.span`
  margin-left: ${(p) => p.$gap}px;
  color: #111;
  font-size: 20.500px;
  font-weight: 700;
  white-space: nowrap;
`;

const IndexUnit = styled.span`
  font-size: 24px;
  font-weight: 400;
`;

// Bandeau du site, par-dessus le bas de l'écran
const Banner = styled.div`
  position: absolute;
  left: 1080px;
  top: 1286px;
  width: 1080px;
  height: 109px;
  box-sizing: border-box;
  display: flex;
  align-items: center;
  background: #7eaad8;
  padding-left: 22px;
`;

const BannerTitle = styled.div`
  width: 412px;
  padding-top: 4px;
  color: #10108c;
  font-size: 75px;
  font-weight: 900;
  line-height: 1;
  white-space: nowrap;
  -webkit-text-stroke: 1px #10108c;
`;

const BannerUrl = styled.div`
  margin-left: 38px;
  color: #fff;
  font-family: "DejaVu Serif", serif;
  font-size: 72px;
  font-weight: 700;
  letter-spacing: -1.800px;
  white-space: nowrap;
`;
